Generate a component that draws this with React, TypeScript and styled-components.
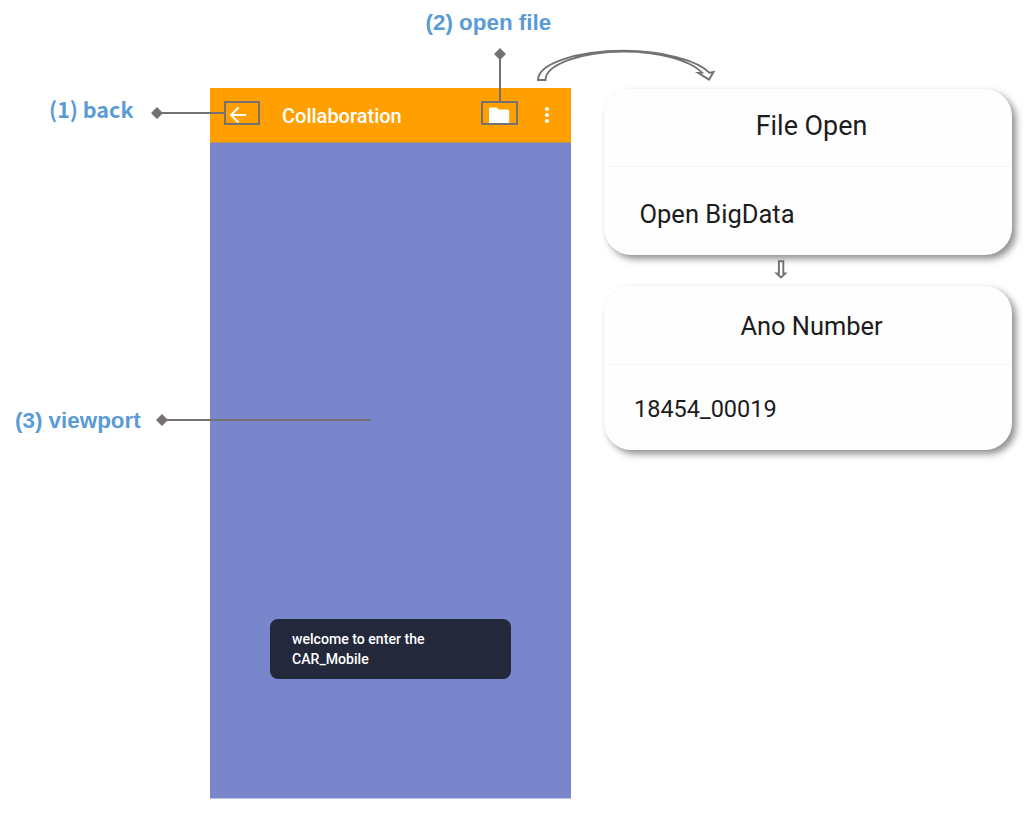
import React from "react";
import styled, { createGlobalStyle } from "styled-components";

const GlobalStyle = createGlobalStyle`
  * { box-sizing: border-box; }
  body { margin: 0; background: #fff; }
`;

const line = "#767171";

const Board = styled.main`
  position: relative;
  width: 1025px;
  height: 827px;
  overflow: hidden;
  display: grid;
  grid-template-columns: 210px 361px 1fr;
  grid-template-rows: 88px 711px;
  font-family: Roboto, sans-serif;
`;

const Label = styled.div<{ $cjk?: boolean; $size?: number }>`
  color: #5b9bd5;
  font-family: ${(p) => (p.$cjk ? '"Noto Sans CJK SC"' : '"Liberation Sans"')}, sans-serif;
  font-size: ${(p) => p.$size ?? 22.4}px;
  font-weight: 700;
  line-height: 28px;
  white-space: nowrap;
`;

const TopNote = styled.div`
  grid-column: 2 / 4;
  padding: 9px 0 0 215.5px;
`;

const SideNotes = styled.div`
  grid-column: 1;
  grid-row: 2;
  display: flex;
  flex-direction: column;
  gap: 284px;
  padding: 7px 0 0 15px;

  & > :first-child { margin-left: 34px; }
`;

const Phone = styled.section`
  grid-column: 2;
  display: flex;
  flex-direction: column;
  background: #7986cb;
  border-bottom: 1px solid #bcc3e6;
`;

const AppBar = styled.header`
  height: 55px;
  display: flex;
  align-items: center;
  background: #ffa000;
  border-bottom: 1px solid #b8925a;
  padding: 0 18px 0 19px;
  color: #fff;
`;

const AppTitle = styled.h1`
  flex: 1;
  margin: 2px 0 0 35px;
  font-size: 20px;
  font-weight: 500;
  line-height: 24px;
`;

const BackIcon = styled.svg`
  display: block;
  width: 18px;
  height: 18px;
`;

const FolderIcon = styled.svg`
  display: block;
  width: 21px;
  height: 17px;
  margin-right: 34px;
`;

const MoreIcon = styled.svg`
  display: block;
  width: 6px;
  height: 18px;
  margin-right: 3px;
`;

const Viewport = styled.div`
  flex: 1;
  display: flex;
  flex-direction: column;
  align-items: center;
  justify-content: flex-end;
  padding-bottom: 119px;
`;

const Toast = styled.div`
  width: 241px;
  height: 60px;
  padding: 10px 22px;
  border-radius: 8px;
  background: #24283b;
  color: #fff;
  font-size: 14.1px;
  font-weight: 500;
  line-height: 20.2px;
`;

const Dialogs = styled.div`
  grid-column: 3;
  padding: 1px 13px 0 33px;
`;

const Dialog = styled.section`
  border-radius: 27px;
  background: #fefefe;
  color: #1c1c1c;
  box-shadow: 4px 4px 7px rgba(0, 0, 0, 0.44), 0 0 2px rgba(0, 0, 0, 0.03);
`;

const DialogTitle = styled.h2<{ $height: number; $size: number; $lift?: number; $drop?: number }>`
  display: flex;
  align-items: center;
  justify-content: center;
  height: ${(p) => p.$height}px;
  margin: 0;
  padding: ${(p) => p.$drop ?? 0}px 0 ${(p) => p.$lift ?? 0}px 7px;
  border-bottom: 1px solid #f5f5f5;
  font-size: ${(p) => p.$size}px;
  font-weight: 400;
`;

const DialogItem = styled.div<{ $height: number; $indent: number; $size: number; $drop: number }>`
  display: flex;
  align-items: center;
  height: ${(p) => p.$height}px;
  padding: ${(p) => p.$drop}px 0 0 ${(p) => p.$indent}px;
  font-size: ${(p) => p.$size}px;
`;

const DownArrow = styled.svg`
  display: block;
  width: 14px;
  height: 20px;
  margin: 5px 0 6px 170px;
`;

const Connectors = styled.svg`
  position: absolute;
  inset: 0;
  pointer-events: none;
`;

export default function App() {
  return (
    <>
      <GlobalStyle />
      <Board>
        <TopNote>
          <Label>(2) open file</Label>
        </TopNote>
        <SideNotes>
          <Label $cjk $size={21.5}>(1) back</Label>
          <Label>(3) viewport</Label>
        </SideNotes>
        <Phone>
          <AppBar>
            <BackIcon viewBox="0 0 18 18" fill="none" stroke="#fff" strokeWidth="2">
              <path d="M17 9H2.5M9.5 1.5L2 9l7.5 7.5" />
            </BackIcon>
            <AppTitle>Collaboration</AppTitle>
            <FolderIcon viewBox="0 0 21 17" fill="#fff">
              <path d="M1.6 .5h6l2 2h8.6a2 2 0 0 1 2 2v10a2 2 0 0 1-2 2H1.6a2 2 0 0 1-2-2v-12a2 2 0 0 1 2-2z" />
            </FolderIcon>
            <MoreIcon viewBox="0 0 6 18" fill="#fff">
              <circle cx="3" cy="3" r="2.1" />
              <circle cx="3" cy="9" r="2.1" />
              <circle cx="3" cy="15" r="2.1" />
            </MoreIcon>
          </AppBar>
          <Viewport>
            <Toast>
              welcome to enter the
              <br />
              CAR_Mobile
            </Toast>
          </Viewport>
        </Phone>
        <Dialogs>
          <Dialog>
            <DialogTitle $height={78} $size={26.9} $lift={3}>File Open</DialogTitle>
            <DialogItem $height={88} $indent={35.5} $size={25.5} $drop={5}>Open BigData</DialogItem>
          </Dialog>
          <DownArrow viewBox="0 0 14 20" fill="#fff" stroke={line} strokeWidth="1.9">
            <path d="M4.9 1.2h4.4v12.3h2L7 17.4l-4.3-3.9h2.2z" />
          </DownArrow>
          <Dialog>
            <DialogTitle $height={79} $size={25.4} $drop={2}>Ano Number</DialogTitle>
            <DialogItem $height={85} $indent={30} $size={23.5} $drop={3}>18454_00019</DialogItem>
          </Dialog>
        </Dialogs>
        <Connectors width="1025" height="827" fill="none" stroke={line} strokeWidth="2">
          <path d="M157 113H225M500 54V102M162 420H370.5" />
          <rect x="225" y="102" width="34" height="22" />
          <rect x="482" y="102" width="35" height="22" />
          <g fill={line} stroke="none">
            <path d="M157 107l6 6-6 6-6-6zM500 48l6 6-6 6-6-6zM162 414l6 6-6 6-6-6z" />
          </g>
          <path
            strokeWidth="1.9"
            d="M538 80C538 64 576 50.8 624 50.8C664 50.8 698 61 709.5 72.8L713.5 72L709 79.6L698 72.8L702 72.6C690 60 658 51.6 624 51.6C580 51.6 545.5 65 545.5 80Z"
          />
        </Connectors>
      </Board>
    </>
  );
}
